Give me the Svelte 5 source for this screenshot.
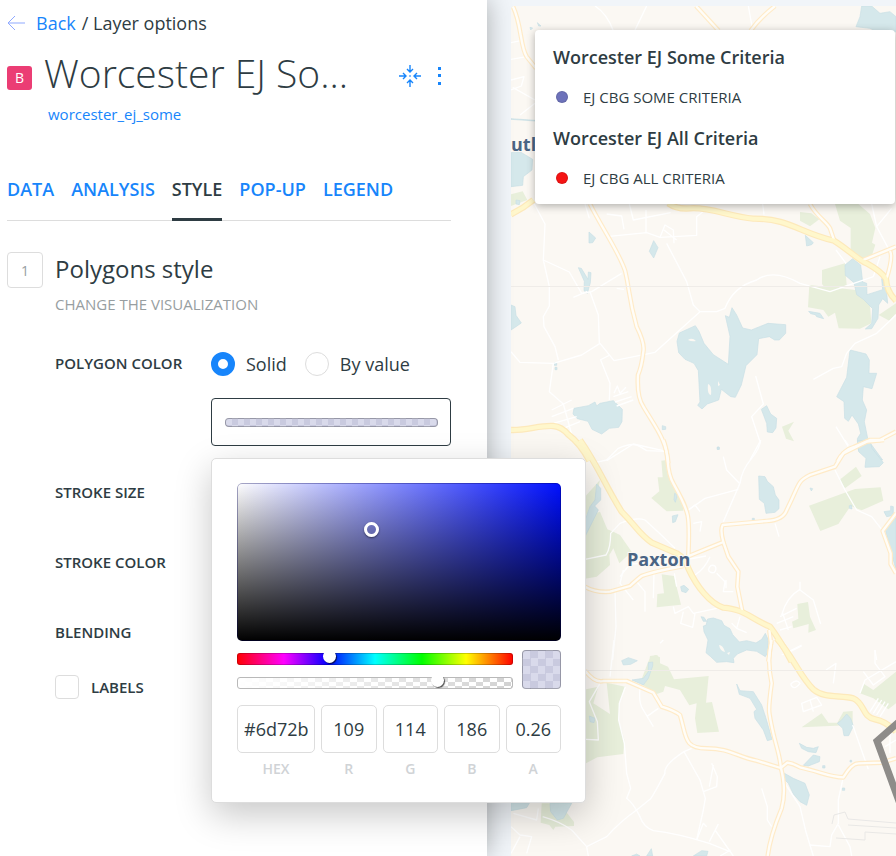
<script>
  let colorMode = $state('solid');
  let labels = $state(false);
  let hue = $state(125);
  let alpha = $state(74);
  const tabs = ['DATA', 'ANALYSIS', 'STYLE', 'POP-UP', 'LEGEND'];
  let active = $state('STYLE');
  const channels = [
    { id: 'HEX', value: '#6d72ba' },
    { id: 'R', value: '109' },
    { id: 'G', value: '114' },
    { id: 'B', value: '186' },
    { id: 'A', value: '0.26' }
  ];
  const legend = [
    { title: 'Worcester EJ Some Criteria', item: 'EJ CBG SOME CRITERIA', color: '#6d72ba' },
    { title: 'Worcester EJ All Criteria', item: 'EJ CBG ALL CRITERIA', color: '#f51414' }
  ];
  const cursor = { x: 41.7, y: 30 };

  // Map tiles: each has its own origin, in units of a third of a pixel.
  const tiles = [
    {
      x: 480, y: 0,
      parks: ['M93 583L128 574L142 600L93 618Z'],
      water: [
        'M93 458L120 455L158 478L156 510L130 530L128 556L93 560Z',
        'M1145 18H1175L1200 40L1230 35L1248 50V96L1216 92L1200 100L1170 85L1128 80L1140 50Z',
        'M108 600L120 602L118 614L108 612ZM172 68L183 78L176 78ZM150 82L158 84L152 90Z',
        'M93 356L165 361L165 363L93 358Z'
      ],
      minor: ['M345 18Q380 40 400 92', 'M500 18L465 90', 'M805 18L818 90', 'M93 128L122 122M93 178L140 170', 'M93 240L132 230L124 258L93 270M98 262L165 300M120 345L165 310'],
      second: ['M98 18C125 70 120 140 140 170L168 205', 'M648 18L716 92', 'M885 18Q838 55 812 92'],
      major: []
    },
    {
      x: 500, y: 200,
      parks: [
        'M1005 12H1075L1110 42L1126 84L1116 128L1126 134L1116 166L1085 180L1052 155V84L1020 62Z',
        'M900 36L934 40L958 58L930 79L900 62Z', 'M966 210L1035 190L1040 255L985 275L966 252Z',
        'M928 255L1068 270L1110 315L1114 370L1080 386L1016 385L1005 338L985 350L970 330L924 322Z',
        'M1136 345L1188 310V340L1168 362Z', 'M846 680L882 665L865 692L882 724L858 716Z'
      ],
      water: [
        'M676 347L688 352L696 323L710 345L728 384L754 390L804 370L857 374V400L838 420H824L808 410L776 416L771 464L738 497L724 555L706 592L692 590L664 568L656 600L622 612L606 627L593 616L600 606L595 512L582 490L555 478L536 458L531 424L538 399L586 377L597 394L612 430L640 464L685 493L690 409Z',
        'M222 625L265 617L285 606L290 618L300 610L340 602L367 628L366 665L356 682L328 685L305 702L276 688L264 664L232 656L219 642Z',
        'M784 628L800 617L812 642L830 655L828 684L818 698L802 696L800 670Z',
        'M1050 450L1098 462L1108 480L1107 520L1130 520L1116 566L1090 560L1087 600L1100 630L1093 665L1104 720L1148 780H1110L1075 750L1072 716L1082 700L1075 672L1056 645L1045 664L1034 655L1032 605L1010 590L1040 532Z',
        'M1035 195L1058 176L1082 195L1088 246L1100 250L1101 284L1148 269L1145 236L1156 236L1163 310L1148 296L1136 315L1134 355L1115 386L1096 387L1115 370L1118 326L1090 298L1070 284L1062 248L1036 226Z',
        'M33 315L45 320L48 346L64 369L48 380L33 390Z', 'M267 96L287 114L278 128L267 129Z',
        'M461 122L474 143L461 174L448 154Z', 'M235 203L244 205L264 238L265 216L273 218L271 248L262 280L252 272L253 244Z',
        'M916 106L940 128L935 134L920 138Z', 'M926 334L960 340L971 356L950 350L946 344L932 341Z',
        'M163 488h7v8h-7zM165 502h6v7h-6zM487 677l10 3v8l-10 1zM652 741h5v7h-5z'
      ],
      minor: [
        'M103 12L135 72L130 180L148 260L148 318L130 350L132 380L165 440L175 480', 'M130 180L208 216L245 280L275 275L365 220',
        'M33 455L60 487L160 490L245 465L300 430L342 482L465 457L600 335L650 335L675 325Q700 260 770 240Q820 205 900 250L990 275L1120 230',
        'M270 275L295 345L298 430', 'M160 490L148 575L190 612L215 703', 'M302 480L330 550L328 600', 'M300 480L330 465',
        'M320 110L440 98L480 112L590 106V50L608 36', 'M500 130L560 245L580 315L600 335', 'M320 782L400 732L500 754',
        'M388 12L400 60L512 38M438 30V98M320 42L365 48L372 88M480 112L495 75L520 90L522 130M492 90L530 120',
        'M767 528L790 612L755 650L780 725L750 780', 'M940 538L1000 505L1025 500L1040 460L1065 430L1130 400L1188 345',
        'M155 630L215 600M155 650L220 625M160 670L230 650M190 685L240 665M340 590L385 575M345 606L395 590M350 618L400 600M342 580L352 558L360 580L378 562',
        'M350 265L372 268M220 292L262 274M1120 230L1140 170M1008 150L1038 190M1115 12L1130 80L1165 145M1130 80L1175 25', 'M1008 680L1045 740M255 12L268 55M788 12L792 44'
      ],
      second: [
        'M270 12C300 75 360 160 376 215C390 275 385 290 410 380Q435 430 430 455Q425 500 414 525Q410 590 430 620C465 680 500 720 505 790',
        'M930 12C950 50 980 65 990 85L1002 120', 'M1085 182L1188 140', 'M1170 153Q1180 170 1160 235', 'M1012 785Q1030 750 1062 741L1110 720H1140L1188 695'
      ],
      major: ['M33 43Q70 25 100 0', 'M505 10Q530 28 570 25C630 20 690 50 760 56C870 55 900 100 1002 122C1040 145 1075 180 1100 190Q1145 215 1158 237Q1160 275 1188 302', 'M33 690C80 692 120 675 160 678Q185 680 205 704Q240 730 268 782']
    },
    {
      x: 580, y: 440,
      parks: [
        'M244 62L262 60L272 118L310 186V212L260 214L214 174L238 154L233 112L248 112Z', 'M778 120L828 80L845 108L795 145Z',
        'M687 197L825 147L902 142L910 182L845 211L812 198L775 252L721 273Z',
        'M15 230L60 215L82 268L100 275L120 285L155 335L118 370L100 325L88 345L90 375L50 410L15 416Z', 'M15 170L60 120L45 190L15 230Z',
        'M245 403L282 408L303 494L230 502L232 462L252 460Z', 'M652 492L684 486L690 530L708 570L685 578L686 552L640 565L636 545L655 536Z', 'M210 648L232 645L238 660H208Z'
      ],
      water: [
        'M50 132L62 145V180L44 198L55 210L15 290V240L30 200L45 180Z', 'M536 108L555 110L562 124L580 140L586 165L597 180V206L585 217L558 220L553 190L538 178Z',
        'M832 2H870L876 25L910 68L898 80L855 82L858 55L836 35Z', 'M948 230L916 270L932 330L948 390Z', 'M912 215L932 212V198L940 200V226L920 230Z',
        'M277 228L294 224L286 245L278 248ZM284 160l8 5-6 22-4-8ZM302 440L312 436L326 448L318 458L305 454ZM690 144l8 2-4 7ZM808 197l6-2 2 12-8-2ZM412 22h6v6h-6zM517 235h6v6h-6z',
        'M383 537L400 534L425 542L432 556L450 566L458 584L478 606L500 602L528 609L545 598L556 580L565 600L563 638L556 650L530 634L500 630L472 642L460 655L462 668L440 665L410 667L392 650L378 638L384 600L372 575L370 558L378 556ZM363 530L372 532L380 544L370 544Z'
      ],
      minor: [
        'M45 68L80 60L115 25Q160 5 180 20L200 32L258 34', 'M542 0Q540 25 515 55Q485 90 480 130L430 245', 'M325 210L375 175L475 148', 'M430 50L440 90L478 130',
        'M15 358L78 345Q92 325 92 280L120 250Q170 230 195 240Q240 280 285 325', 'M765 90L795 150L830 210L875 230L908 272', 'M120 410L150 372L285 365L378 348',
        'M283 400L290 440M222 400L220 475M130 390L120 430L160 480M170 425L195 455V515M105 455L108 560L98 660', 'M345 405Q375 385 390 350M385 390Q390 370 405 378Q412 388 402 398Q390 400 385 390M410 400L435 425L430 455H460M438 420V445',
        'M280 500L285 520L325 500L340 520L410 505M310 515L302 550L338 562L345 520M455 550L470 565L500 578M470 565L480 530',
        'M605 525Q620 470 660 448V425M660 450L700 480L722 552M600 530L650 505M590 550L640 530M600 570L635 560M608 520L625 570M585 250L597 290M325 210L345 195L360 215M340 250L365 245L360 275', 'M620 640L665 618M885 630L890 660M795 0L805 15'
      ],
      second: [
        'M250 0C270 45 255 90 280 130C330 220 330 225 325 348', 'M322 350L430 306Q420 270 428 255L560 243Q610 240 620 210C660 130 650 125 690 105L765 80L790 40L860 5L912 0',
        'M430 306L445 350L475 395L472 440L487 515', 'M15 440Q45 458 90 455L150 438Q175 415 185 408Q220 395 310 378', 'M948 220L908 273L932 340V372L948 400', 'M568 570L573 610L565 665'
      ],
      major: ['M0 0C50 70 80 145 125 215C170 260 175 280 215 308L290 340Q315 355 325 385C350 440 390 490 430 503C500 510 500 530 570 560Q600 600 635 665']
    },
    {
      x: 480, y: 640,
      parks: [
        'M318 148L355 140L340 190L390 222L380 128L436 140L418 190L416 240L433 300L430 342L352 352L318 370Z', 'M506 62L525 45L540 52L540 70L564 80L582 118L686 108L678 188L696 186L717 275L652 279L645 235L650 190L628 196L600 150L555 138L550 155L530 162L480 130Z',
        'M185 490H275L258 515L282 546V558L226 560L220 570L208 555L182 548Z', 'M965 262L1025 220L1045 248L1072 248L1090 215L1118 213V255Z', 'M1140 160L1152 132L1180 150L1248 95V190L1225 208L1180 175Z'
      ],
      water: [
        'M425 62L445 53L472 62L452 73L430 75Z', 'M505 68L518 66V78L505 115L490 135L456 120L490 115L505 95Z', 'M770 132L780 152L820 155L845 195L858 235L876 298L862 302L850 270L825 235L822 215L830 208L810 175L778 163Z',
        'M1072 250L1085 240L1100 222L1112 235L1120 258L1106 287H1092L1088 265Z', 'M910 398L940 415L975 430L988 465L980 496L960 485L940 462L925 430L910 415Z',
        'M93 490H148L140 503L93 512Z', 'M210 490H275L250 535L232 540L212 515Z', 'M958 310L980 322L1000 325L1015 320L1008 338L985 335L965 325ZM970 376L1000 345L1020 350L1018 365L985 378Z', 'M500 648L514 626L518 648ZM640 648L665 632L684 634L680 648ZM455 648L470 642L480 648Z',
        'M328 228L345 235L342 248L330 245ZM1028 377h7v7h-7zM1087 444h7v7h-7zM1110 361h5v5h-5z'
      ],
      minor: [
        'M402 0L390 110', 'M436 140L418 190L416 240L433 310L440 400L452 445L440 475Q460 490 480 530Q490 560 520 572Q590 580 688 610L750 635', 'M635 325L612 335Q550 375 555 400Q515 475 510 478L470 510Q420 545 380 590L320 620L325 648', 'M612 335L660 420L676 475L670 510L650 600',
        'M188 530Q240 545 275 570L320 620M175 505L170 540L100 520M93 560L120 585L155 590L140 640M120 590L93 640', 'M1118 255L1165 388', 'M1088 420L1075 480V550L1055 585L1050 620L988 615', 'M915 430L960 500Q975 575 1000 648', 'M845 445L862 500V540L875 560', 'M1075 555L1110 620L1115 648',
        'M695 370L712 410L710 440L670 455M688 440L700 375M360 130L328 185L352 245L355 300L318 298M480 145Q475 190 490 210L520 260M500 230L535 205M550 0L540 10',
        'M905 45L965 15M1140 160L1155 120L1248 65M1038 90L1068 70L1060 130M1150 95L1180 135L1215 110L1185 70V30M932 132Q950 115 960 130Q940 155 932 132M965 190L1010 172L1025 195L970 215ZM990 180L1000 215M650 600L670 550L680 560M688 605L715 552M720 648L752 630M705 570L760 648',
        'M1170 215L1195 175M1180 220L1205 180M1190 225L1215 185M1200 230L1225 190M1215 320L1248 300M1230 340V280'
      ],
      second: [
        'M315 92Q345 130 370 123H440L520 158L545 200Q580 210 600 225C620 290 610 325 680 325C750 325 770 350 830 362L902 384L922 368Q940 370 960 382C1020 395 1050 412 1090 412Q1115 370 1135 370L1205 368L1248 355',
        'M875 0Q860 60 875 130Q865 200 868 220C880 300 900 340 902 380Q920 450 905 505Q870 590 863 648'
      ],
      major: ['M890 -5C940 50 960 110 1000 148C1030 175 1080 165 1120 175C1155 190 1145 230 1185 238Q1220 245 1248 275']
    }
  ];
  const place = (t) => `translate(${t.x} ${t.y}) scale(0.33333)`;
</script>

<main class="app">
  <section class="map" aria-label="Map">
    <svg class="basemap" viewBox="511 6 385 850" preserveAspectRatio="xMinYMin slice">
      <rect x="511" y="6" width="385" height="850" fill="#fbf8f3" />
      {#each tiles as t}
        <g transform={place(t)} fill="#e8efdb">
          {#each t.parks as d}<path {d} />{/each}
        </g>
      {/each}
      {#each tiles as t}
        <g transform={place(t)} fill="#d5e8eb" stroke="#c9e0e5" stroke-width="2" stroke-linejoin="round">
          {#each t.water as d}<path {d} />{/each}
        </g>
      {/each}
      <g fill="#fbf8f3"><path d="M688 340q4-3 8 1q-4 1-8-1M708 384q4 1 3 11q-4 0-3-11M718 381l2 4-2 1zM719 645q4 0 6 7q-5-1-6-7M727 653l3-1-1 3z" /></g>
      {#each tiles as t}
        <g transform={place(t)} fill="none" stroke="#fff" stroke-width="4" stroke-linejoin="round">
          {#each t.minor as d}<path {d} />{/each}
        </g>
      {/each}
      {#each tiles as t}
        <g transform={place(t)} fill="none" stroke-linejoin="round">
          {#each t.second as d}<path {d} stroke="#ffebc8" stroke-width="14" />{/each}
          {#each t.major as d}<path {d} stroke="#fde9bb" stroke-width="19" />{/each}
        </g>
      {/each}
      {#each tiles as t}
        <g transform={place(t)} fill="none" stroke-linejoin="round">
          {#each t.second as d}<path {d} stroke="#fffdf8" stroke-width="7" />{/each}
          {#each t.major as d}<path {d} stroke="#fff7cc" stroke-width="12" />{/each}
        </g>
      {/each}
      <path d="M511 286.500H896M511 670.500H896" stroke="#efece8" />
      <path d="M832 824L834 815L845 812L848 819L896 823M848 825L896 828M896 834L865 832V840L836 838" fill="none" stroke="#e9e8e6" />
      <path d="M900 721L877 741L900 804" fill="none" stroke="#8e8c89" stroke-width="7" />
      <g class="places"><text x="511" y="151">utla</text><text x="627" y="566">Paxton</text></g>
    </svg>
    <aside class="legend">
      {#each legend as l}
        <h2>{l.title}</h2>
        <p><i style:background={l.color}></i>{l.item}</p>
      {/each}
    </aside>
  </section>

  <section class="panel">
    <nav class="crumbs">
      <a href="#back"><svg width="18" height="16" viewBox="0 0 18 16"><path d="M8 1L1 8L8 15M1 8H18" fill="none" stroke="#8fa9ff" /></svg>Back</a>
      <span>/ Layer options</span>
    </nav>
    <header>
      <span class="badge">B</span>
      <h1>Worcester EJ So...</h1>
      <button class="icon" aria-label="Center map on layer">
        <svg width="24" height="24" viewBox="0 0 24 24" fill="none" stroke="#1785fb" stroke-width="1.400"><path d="M12 1V8M9 5L12 8L15 5M12 23V16M9 19L12 16L15 19M1 12H8M5 9L8 12L5 15M23 12H16M19 9L16 12L19 15" /><path d="M11.300 12H12.700" /></svg>
      </button>
      <button class="icon more" aria-label="More options">
        <svg width="4" height="18" viewBox="0 0 4 18" fill="#1785fb"><path d="M0 0H3V3H0ZM0 7H3V10H0ZM0 15H3V18H0Z" /></svg>
      </button>
    </header>
    <a class="source" href="#source">worcester_ej_some</a>
    <div class="tabs" role="tablist">
      {#each tabs as t}
        <button role="tab" aria-selected={active === t} class:active={active === t} onclick={() => (active = t)}>{t}</button>
      {/each}
    </div>

    <div class="section">
      <span class="step">1</span>
      <div class="body">
        <h2>Polygons style</h2>
        <p class="hint">CHANGE THE VISUALIZATION</p>
        <div class="row">
          <span class="name">POLYGON COLOR</span>
          <div class="control">
            <div class="radios">
              <label><input type="radio" name="mode" value="solid" bind:group={colorMode} />Solid</label>
              <label><input type="radio" name="mode" value="value" bind:group={colorMode} />By value</label>
            </div>
            <button class="swatch" aria-label="Polygon color"><span class="checker"></span></button>
            <div class="picker">
              <div class="field"><button aria-label="Saturation and brightness" style:left="{cursor.x}%" style:top="{cursor.y}%"></button></div>
              <div class="sliders">
                <div class="bars">
                  <input class="hue" type="range" min="0" max="384" aria-label="Hue" bind:value={hue} />
                  <input class="alpha" type="range" aria-label="Opacity" bind:value={alpha} />
                </div>
                <span class="preview checker"></span>
              </div>
              <div class="channels">
                {#each channels as c}
                  <label><input type="text" value={c.value} />{c.id}</label>
                {/each}
              </div>
            </div>
          </div>
        </div>
        <div class="line">STROKE SIZE</div>
        <div class="line">STROKE COLOR</div>
        <div class="line">BLENDING</div>
        <label class="tick"><input type="checkbox" bind:checked={labels} />LABELS</label>
      </div>
    </div>
  </section>
</main>

<style>
  :global(body) { margin: 0; }
  * { box-sizing: border-box; }
  .app { display: flex; flex-direction: row-reverse; min-height: 100vh; overflow: hidden; background: #f1f5f9; color: #2e3c43; font-family: "Open Sans", sans-serif; }
  h1, h2, p { margin: 0; }
  a { color: #1785fb; text-decoration: none; }
  button { padding: 0; border: 0; background: none; font: inherit; color: inherit; cursor: pointer; }
  .panel { position: relative; z-index: 1; flex: 0 0 487px; padding: 10px 36px 0 7px; background: #fff; box-shadow: 0 0 24px rgba(0, 0, 0, 0.3); }
  .map { position: relative; flex: 1; margin: 6px 0 0 24px; overflow: hidden; border-radius: 4px 0 0 0; }
  .basemap { position: absolute; inset: 0; width: 100%; height: 100%; }
  .places text { fill: #4a6484; font: 700 18px "Open Sans", sans-serif; stroke: #fbf8f3; stroke-width: 2px; paint-order: stroke; }
  .legend { position: relative; margin: 24px 1px 0 24px; padding: 12px 18px 0; border-radius: 4px; background: #fff; box-shadow: 0 2px 8px rgba(0, 0, 0, 0.3); }
  .legend h2 { font-size: 18px; font-weight: 600; line-height: 30px; }
  .legend p { display: flex; align-items: center; gap: 15px; height: 51px; padding: 0 0 2px 3px; font-size: 15px; }
  .legend i { width: 12px; height: 12px; border-radius: 50%; border: 1px solid rgba(0, 0, 0, 0.1); }

  .crumbs { display: flex; gap: 6px; font-size: 18px; line-height: 26px; }
  .crumbs a { display: flex; align-items: center; gap: 11px; }
  header { display: flex; align-items: center; height: 60px; margin-top: 10px; }
  .badge { width: 25px; height: 24px; margin: 4px 12px 0 0; border-radius: 3px; background: #eb3d74; color: #fff; font-size: 14px; line-height: 24px; text-align: center; }
  h1 { flex: 1; font-size: 39px; font-weight: 300; line-height: 54px; height: 60px; white-space: nowrap; }
  .icon { display: flex; }
  .more { margin: 0 9px 0 16px; }
  .source { display: block; margin: -1px 0 0 41px; font-size: 15px; line-height: 18px; }
  .tabs { display: flex; gap: 17px; height: 62px; margin-top: 36px; border-bottom: 1px solid #ddd; }
  .tabs button { height: 62px; border-bottom: 3px solid transparent; font-size: 18px; font-weight: 600; color: #1785fb; }
  .tabs .active { border-color: #2e3c43; color: #2e3c43; }
  .section { display: flex; gap: 12px; margin-top: 31px; }
  .step { flex: none; width: 36px; height: 36px; border: 1px solid #ddd; border-radius: 4px; color: #979ea1; font-size: 14px; line-height: 36px; text-align: center; }
  .body { flex: 1; }
  .body h2 { font-size: 24px; font-weight: 400; line-height: 34px; }
  .hint { font-size: 15px; line-height: 36px; color: #979ea1; }
  .row { display: flex; margin-top: 30px; }
  .name, .line, .tick { font-size: 15px; font-weight: 600; line-height: 22px; }
  .name { width: 156px; }
  .control { position: relative; flex: 1; }
  .radios { display: flex; gap: 18px; font-size: 18px; line-height: 24px; }
  .radios label { display: flex; gap: 11px; }
  .radios input { appearance: none; width: 24px; height: 24px; margin: 0; border: 1px solid #ddd; border-radius: 50%; background: #fff; }
  .radios input:checked { border: 7px solid #1785fb; }
  .swatch { display: flex; align-items: center; width: 100%; height: 48px; margin-top: 22px; padding: 0 12px 0 13px; border: 1px solid #2e3c43; border-radius: 4px; }
  .checker { border: 1px solid rgba(0, 0, 0, 0.25); border-radius: 4px; background: repeating-conic-gradient(#c9cadf 0 25%, #d9daeb 0 50%) 0 0 / 12px 12px; }
  .swatch .checker { flex: 1; height: 9px; }
  .picker { position: absolute; z-index: 2; top: 106px; left: 0; width: 375px; height: 345px; padding: 24px 24px 0 25px; border: 1px solid #ddd; border-radius: 5px; background: #fff; box-shadow: 0 12px 36px rgba(0, 0, 0, 0.22); }
  .field { position: relative; height: 158px; border-radius: 5px; background: linear-gradient(transparent, #000), linear-gradient(90deg, #fff, #0010ff); box-shadow: inset 0 0 0 1px rgba(0, 0, 90, 0.35); }
  .field button { position: absolute; width: 15px; height: 15px; margin: -8px; border: 3px solid #fff; border-radius: 50%; box-shadow: 0 1px 2px rgba(0, 0, 0, 0.5); }
  .sliders { display: flex; gap: 9px; margin-top: 9px; }
  .bars { flex: 1; display: flex; flex-direction: column; gap: 12px; padding-top: 3px; }
  .bars input { appearance: none; width: 100%; height: 12px; margin: 0; border-radius: 3px; }
  .bars input::-webkit-slider-thumb { appearance: none; width: 13px; height: 13px; margin-top: -3px; border-radius: 50%; background: #fff; box-shadow: 1px 1px 1px rgba(0, 0, 0, 0.7); clip-path: inset(3px -3px -3px -3px); }
  .bars input::-webkit-slider-runnable-track { height: 12px; }
  .hue { box-shadow: inset 0 0 0 1px rgba(0, 0, 0, 0.2); background: linear-gradient(90deg, #f00, #f0f 17%, #00f 33%, #0ff 50%, #0f0 67%, #ff0 83%, #f00); }
  .alpha { border: 1px solid #b9b9b9; background: linear-gradient(90deg, #fff, transparent), repeating-conic-gradient(#d2d2d2 0 25%, #fff 0 50%) 0 0 / 14px 8px; }
  .preview { width: 39px; height: 39px; }
  .preview.checker { background-size: 15px 15px; }
  .channels { display: grid; grid-template-columns: 78px repeat(4, 1fr); gap: 6px; margin-top: 16px; }
  .channels label { display: flex; flex-direction: column; color: #d0d3d6; font-size: 14px; font-weight: 600; line-height: 32px; text-align: center; }
  .channels input { width: 100%; height: 48px; padding: 0 6px; border: 1px solid #ddd; border-radius: 5px; font: 18px "Open Sans", sans-serif; color: #2e3c43; text-align: center; }
  .line { height: 24px; margin-top: 46px; }
  .row + .line { margin-top: 35px; }
  .tick { display: flex; gap: 12px; margin-top: 30px; line-height: 24px; }
  .tick input { appearance: none; width: 24px; height: 24px; margin: 0; border: 1px solid #ddd; border-radius: 4px; background: #fff; }
</style>
